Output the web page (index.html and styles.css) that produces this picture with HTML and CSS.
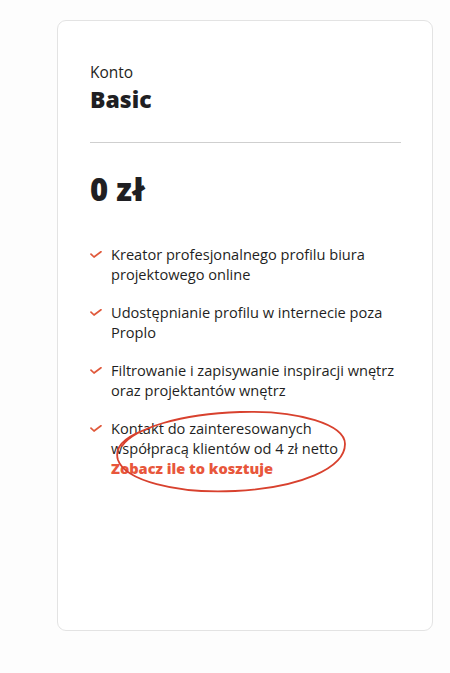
FILE: index.html
```html
<!DOCTYPE html>
<html lang="pl">
<head>
<meta charset="utf-8">
<title>Konto Basic</title>
<link rel="stylesheet" href="styles.css">
</head>
<body>
<div class="card">
  <div class="label">Konto</div>
  <div class="plan">Basic</div>
  <hr class="divider">
  <div class="price">0 zł</div>
  <ul class="features">
    <li class="feature">
      <svg class="check" viewBox="0 0 12 7" width="12" height="7"><polyline points="1,3.2 4,6 11,0.8" fill="none" stroke="#e0583a" stroke-width="1.7" stroke-linecap="round" stroke-linejoin="round"/></svg>
      <span>Kreator profesjonalnego profilu biura<br>projektowego online</span>
    </li>
    <li class="feature">
      <svg class="check" viewBox="0 0 12 7" width="12" height="7"><polyline points="1,3.2 4,6 11,0.8" fill="none" stroke="#e0583a" stroke-width="1.7" stroke-linecap="round" stroke-linejoin="round"/></svg>
      <span>Udostępnianie profilu w internecie poza<br>Proplo</span>
    </li>
    <li class="feature">
      <svg class="check" viewBox="0 0 12 7" width="12" height="7"><polyline points="1,3.2 4,6 11,0.8" fill="none" stroke="#e0583a" stroke-width="1.7" stroke-linecap="round" stroke-linejoin="round"/></svg>
      <span>Filtrowanie i zapisywanie inspiracji wnętrz<br>oraz projektantów wnętrz</span>
    </li>
    <li class="feature">
      <svg class="check" viewBox="0 0 12 7" width="12" height="7"><polyline points="1,3.2 4,6 11,0.8" fill="none" stroke="#e0583a" stroke-width="1.7" stroke-linecap="round" stroke-linejoin="round"/></svg>
      <span>Kontakt do zainteresowanych<br>współpracą klientów od 4 zł netto<br><a class="link" href="#">Zobacz ile to kosztuje</a></span>
    </li>
  </ul>
  <svg class="scribble" viewBox="0 0 300 480" width="300" height="480">
    <path d="M 64 425 C 77 407, 122 393, 182 391 C 242 389, 287 404, 287 423 C 287 447, 242 467, 177 470 C 117 473, 67 459, 60 439 C 56 426, 67 415, 92 407" fill="none" stroke="#d8412e" stroke-width="1.8" stroke-linecap="round"/>
  </svg>
</div>
</body>
</html>
```

FILE: styles.css
```css
html, body {
  margin: 0;
  padding: 0;
  background: #fdfdfd;
}
body {
  font-family: "Open Sans", "Liberation Sans", sans-serif;
  color: #1f1f23;
  padding: 20px 0 0 57px;
}
.card {
  position: relative;
  box-sizing: border-box;
  width: 376px;
  height: 611px;
  background: #ffffff;
  border: 1px solid #e3e3e3;
  border-radius: 9px;
  padding: 40px 31px 0 32px;
}
.label {
  font-size: 15.5px;
  line-height: 22px;
  font-weight: 400;
}
.plan {
  margin-top: 2px;
  font-size: 23px;
  line-height: 28px;
  font-weight: 800;
}
.divider {
  margin: 29px 0 0 0;
  border: 0;
  height: 1px;
  background: #cfcfcf;
}
.price {
  margin-top: 26px;
  font-size: 31px;
  line-height: 40px;
  font-weight: 800;
}
.features {
  list-style: none;
  margin: 35px -20px 0 0;
  padding: 0;
  display: flex;
  flex-direction: column;
  gap: 18px;
}
.feature {
  display: flex;
  align-items: flex-start;
  gap: 9px;
  font-size: 14.6px;
  line-height: 20px;
  font-weight: 400;
}
.check {
  flex: none;
  margin-top: 7px;
}
.link {
  color: #e8573c;
  font-weight: 800;
  text-decoration: none;
}
.scribble {
  position: absolute;
  left: 0;
  top: 0;
  pointer-events: none;
}
```
